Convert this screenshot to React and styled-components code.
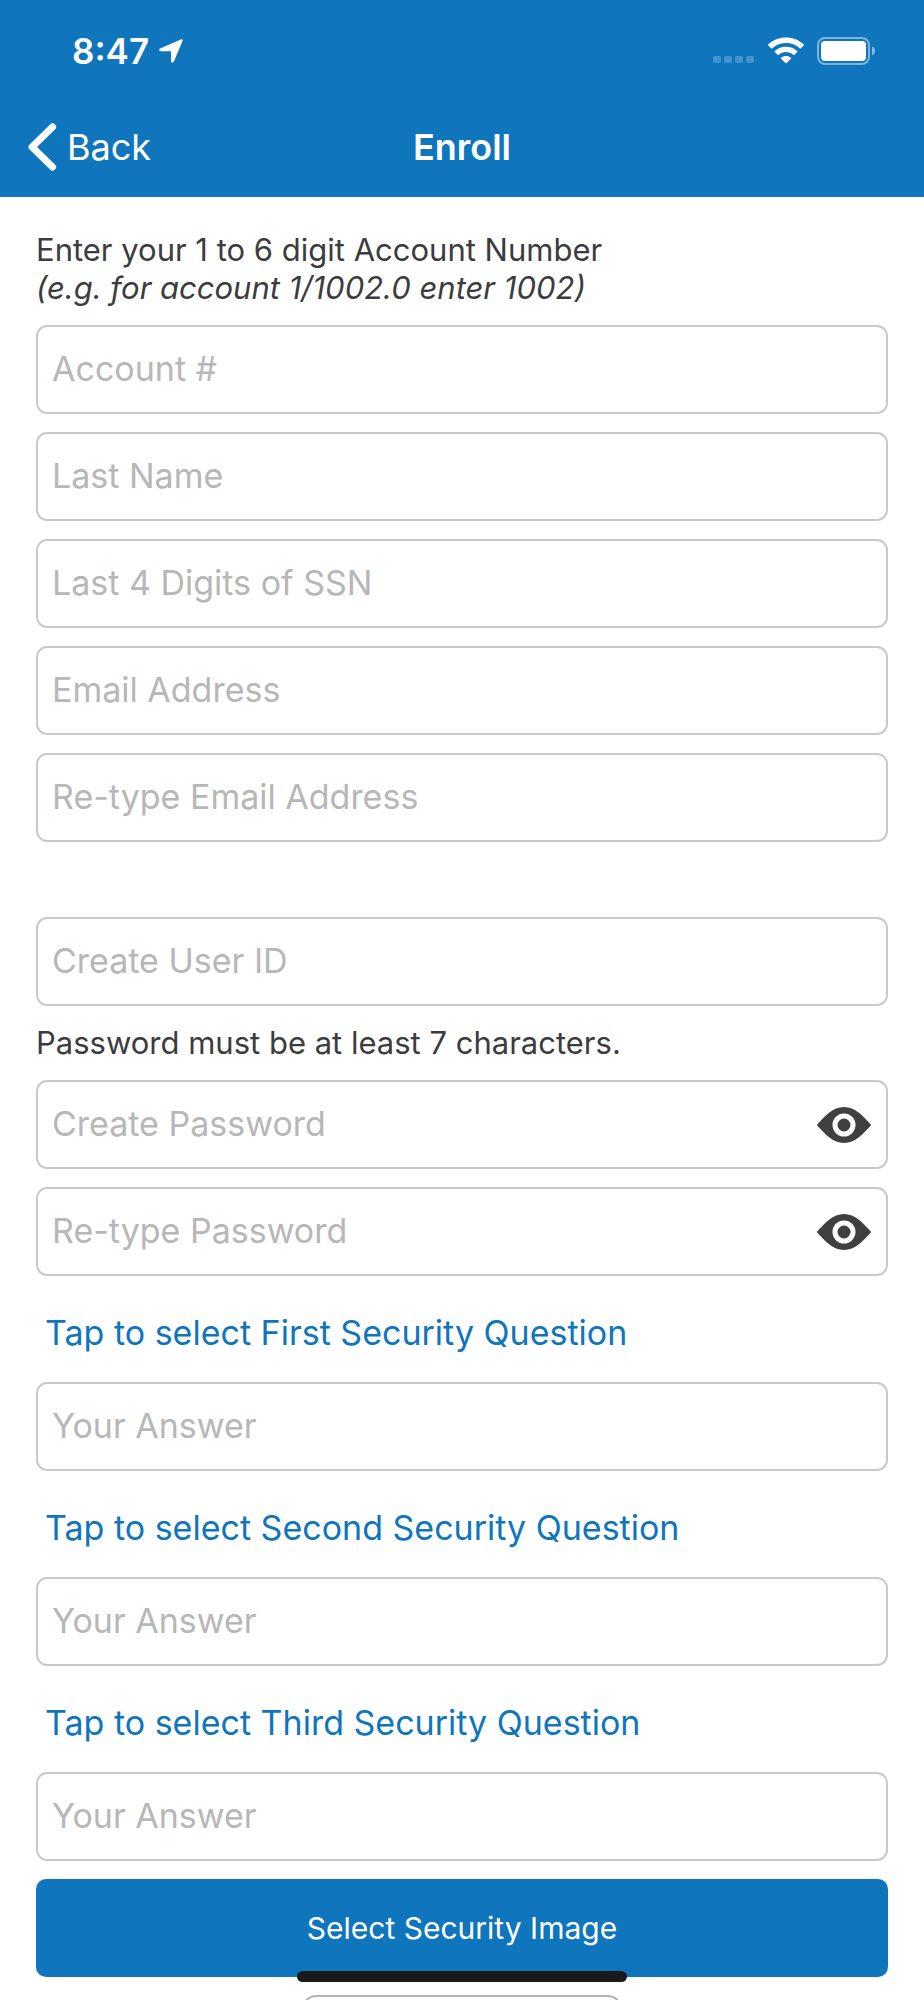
import React, { useState } from "react";
import styled, { createGlobalStyle } from "styled-components";

const GlobalStyle = createGlobalStyle`
  * {
    box-sizing: border-box;
  }
  body {
    margin: 0;
    background: #fff;
    font-family: Inter, "Liberation Sans", sans-serif;
  }
  button, input {
    font-family: inherit;
  }
`;

const Screen = styled.div`
  display: flex;
  flex-direction: column;
  height: 100vh;
`;

const Header = styled.header`
  flex: none;
  background: #0f75bd;
  color: #fff;
`;

const StatusBar = styled.div`
  display: flex;
  align-items: center;
  justify-content: space-between;
  height: 99px;
  padding: 2px 48px 0 72px;
`;

const StatusGroup = styled.div`
  display: flex;
  align-items: center;
  gap: ${(props) => props.$gap}px;
`;

const Time = styled.span`
  font-size: 35px;
  font-weight: 600;
  line-height: 40px;
`;

const NavBar = styled.nav`
  display: grid;
  grid-template-columns: 1fr auto 1fr;
  align-items: center;
  height: 98px;
  padding: 0 28px 2px;
`;

const BackButton = styled.button`
  display: flex;
  align-items: center;
  justify-self: start;
  gap: 10px;
  padding: 0;
  border: none;
  background: none;
  color: #fff;
  font-size: 36px;
  line-height: 48px;
`;

const Title = styled.h1`
  margin: 0;
  font-size: 36px;
  font-weight: 600;
  line-height: 48px;
`;

const Form = styled.form`
  display: flex;
  flex: 1;
  flex-direction: column;
  gap: 18px;
  min-height: 0;
  padding: 34px 36px 0;
  overflow-y: auto;
  scrollbar-width: none;

  > * {
    flex: none;
  }
`;

const Hint = styled.p`
  margin: 0;
  color: #3c3c3e;
  font-size: 31px;
  line-height: 38px;

  em {
    display: block;
  }
`;

const FieldGroup = styled.div`
  display: flex;
  flex-direction: column;
  gap: 18px;
  padding-bottom: 57px;
`;

const FieldBox = styled.div`
  display: flex;
  align-items: center;
  height: 89px;
  padding: 0 15px 0 14px;
  border: 2px solid #c9c9c9;
  border-radius: 11px;
`;

const TextInput = styled.input`
  flex: 1;
  min-width: 0;
  height: 100%;
  padding: 0 0 2px;
  border: none;
  outline: none;
  background: none;
  color: #3c3c3e;
  font-size: 34px;

  &::placeholder {
    color: #b7b7b7;
    opacity: 1;
  }
`;

const EyeButton = styled.button`
  display: flex;
  padding: 0;
  border: none;
  background: none;
`;

const QuestionButton = styled.button`
  height: 70px;
  padding: 6px 9px 0;
  border: none;
  background: none;
  color: #0f75bd;
  font-size: 34px;
  text-align: left;
`;

const ImageButton = styled.button`
  height: 98px;
  border: none;
  border-radius: 10px;
  background: #0f75bd;
  color: #fff;
  font-size: 30px;
`;

const ImagePreview = styled.div`
  align-self: center;
  width: 320px;
  height: 320px;
  border: 2px solid #b4b4b4;
  border-radius: 14px;
`;

const HomeIndicator = styled.div`
  position: fixed;
  bottom: 18px;
  left: 50%;
  width: 330px;
  height: 11px;
  margin-left: -165px;
  border-radius: 6px;
  background: #1a1a1a;
`;

const LocationIcon = () => (
  <svg width="24" height="24" viewBox="0 0 24 24" fill="#fff">
    <path d="M1.2 9.6 21.800.4c1.200-.5 2.200.5 1.700 1.700L14.900 22.500c-.7 1.600-2.900 1.300-2.900-.5V12.200H1.600C-.1 12.200-.4 10.300 1.200 9.600z" />
  </svg>
);

const SignalIcon = () => (
  <svg width="42" height="28" viewBox="0 0 42 28" fill="#fff" fillOpacity="0.22">
    <rect x="0" y="19" width="8" height="7" rx="2" />
    <rect x="11" y="19" width="8" height="7" rx="2" />
    <rect x="22" y="19" width="8" height="7" rx="2" />
    <rect x="33" y="19" width="8" height="7" rx="2" />
  </svg>
);

const WifiIcon = () => (
  <svg width="36" height="28" viewBox="0 0 36 28" fill="#fff">
    <path d="M18 0.500C11.200 0.500 5 3 .4 7.300a.8.800 0 0 0 0 1.200l2.700 2.700c.3.300.8.300 1.200 0C8 7.800 12.800 6 18 6s10 1.800 13.700 5.200c.4.300.9.300 1.200 0L35.600 8.500a.8.800 0 0 0 0-1.200C31 3 24.800.5 18 .5z" />
    <path d="M18 9.700c-4.300 0-8.200 1.600-11.200 4.200a.8.800 0 0 0 0 1.200l2.800 2.700c.3.300.8.300 1.100 0 2-1.700 4.500-2.700 7.300-2.700s5.300 1 7.300 2.700c.3.300.8.300 1.100 0l2.800-2.700a.8.800 0 0 0 0-1.200c-3-2.600-6.900-4.200-11.200-4.200z" />
    <path d="M18 19c-1.900 0-3.600.6-4.900 1.600a.8.800 0 0 0 0 1.200l4.300 4.300c.3.300.9.300 1.200 0l4.300-4.300a.8.800 0 0 0 0-1.200c-1.300-1-3-1.600-4.900-1.600z" />
  </svg>
);

const BatteryIcon = () => (
  <svg width="59" height="28" viewBox="0 0 59 28">
    <rect x="1" y="1" width="51" height="26" rx="7" fill="none" stroke="#fff" strokeOpacity="0.45" strokeWidth="2" />
    <rect x="4" y="4" width="45" height="20" rx="4" fill="#fff" />
    <path d="M55 9.500c2 .9 3 2.600 3 4.500s-1 3.600-3 4.500z" fill="#fff" fillOpacity="0.5" />
  </svg>
);

const ChevronIcon = () => (
  <svg width="29" height="48" viewBox="0 0 29 48" fill="none" stroke="#fff" strokeWidth="7" strokeLinecap="round" strokeLinejoin="round">
    <path d="M24.500 4 4 24l20.500 20" />
  </svg>
);

const EyeIcon = () => (
  <svg width="54" height="36" viewBox="0 0 54 36">
    <path d="M.4 17.200C8.500 8.800 15.500 0 27 0s18.500 8.800 26.600 17.200a1.200 1.200 0 0 1 0 1.600C45.500 27.200 38.500 36 27 36S8.500 27.200.4 18.800a1.200 1.200 0 0 1 0-1.600z" fill="#404040" />
    <circle cx="27" cy="18" r="9" fill="none" stroke="#fff" strokeWidth="5" />
  </svg>
);

function Field({ label, type = "text" }) {
  return (
    <FieldBox>
      <TextInput type={type} placeholder={label} aria-label={label} />
    </FieldBox>
  );
}

function PasswordField({ label }) {
  const [visible, setVisible] = useState(false);

  return (
    <FieldBox>
      <TextInput type={visible ? "text" : "password"} placeholder={label} aria-label={label} />
      <EyeButton type="button" aria-label="Show password" onClick={() => setVisible(!visible)}>
        <EyeIcon />
      </EyeButton>
    </FieldBox>
  );
}

const questions = ["First", "Second", "Third"];

export default function App() {
  return (
    <Screen>
      <GlobalStyle />
      <Header>
        <StatusBar>
          <StatusGroup $gap={10}>
            <Time>8:47</Time>
            <LocationIcon />
          </StatusGroup>
          <StatusGroup $gap={13}>
            <SignalIcon />
            <WifiIcon />
            <BatteryIcon />
          </StatusGroup>
        </StatusBar>
        <NavBar>
          <BackButton type="button">
            <ChevronIcon />
            Back
          </BackButton>
          <Title>Enroll</Title>
        </NavBar>
      </Header>

      <Form onSubmit={(e) => e.preventDefault()}>
        <Hint>
          Enter your 1 to 6 digit Account Number
          <em>(e.g. for account 1/1002.0 enter 1002)</em>
        </Hint>
        <FieldGroup>
          <Field label="Account #" />
          <Field label="Last Name" />
          <Field label="Last 4 Digits of SSN" />
          <Field label="Email Address" type="email" />
          <Field label="Re-type Email Address" type="email" />
        </FieldGroup>

        <Field label="Create User ID" />
        <Hint>Password must be at least 7 characters.</Hint>
        <PasswordField label="Create Password" />
        <PasswordField label="Re-type Password" />

        {questions.map((name) => (
          <React.Fragment key={name}>
            <QuestionButton type="button">Tap to select {name} Security Question</QuestionButton>
            <Field label="Your Answer" />
          </React.Fragment>
        ))}

        <ImageButton type="button">Select Security Image</ImageButton>
        <ImagePreview />
      </Form>
      <HomeIndicator />
    </Screen>
  );
}
